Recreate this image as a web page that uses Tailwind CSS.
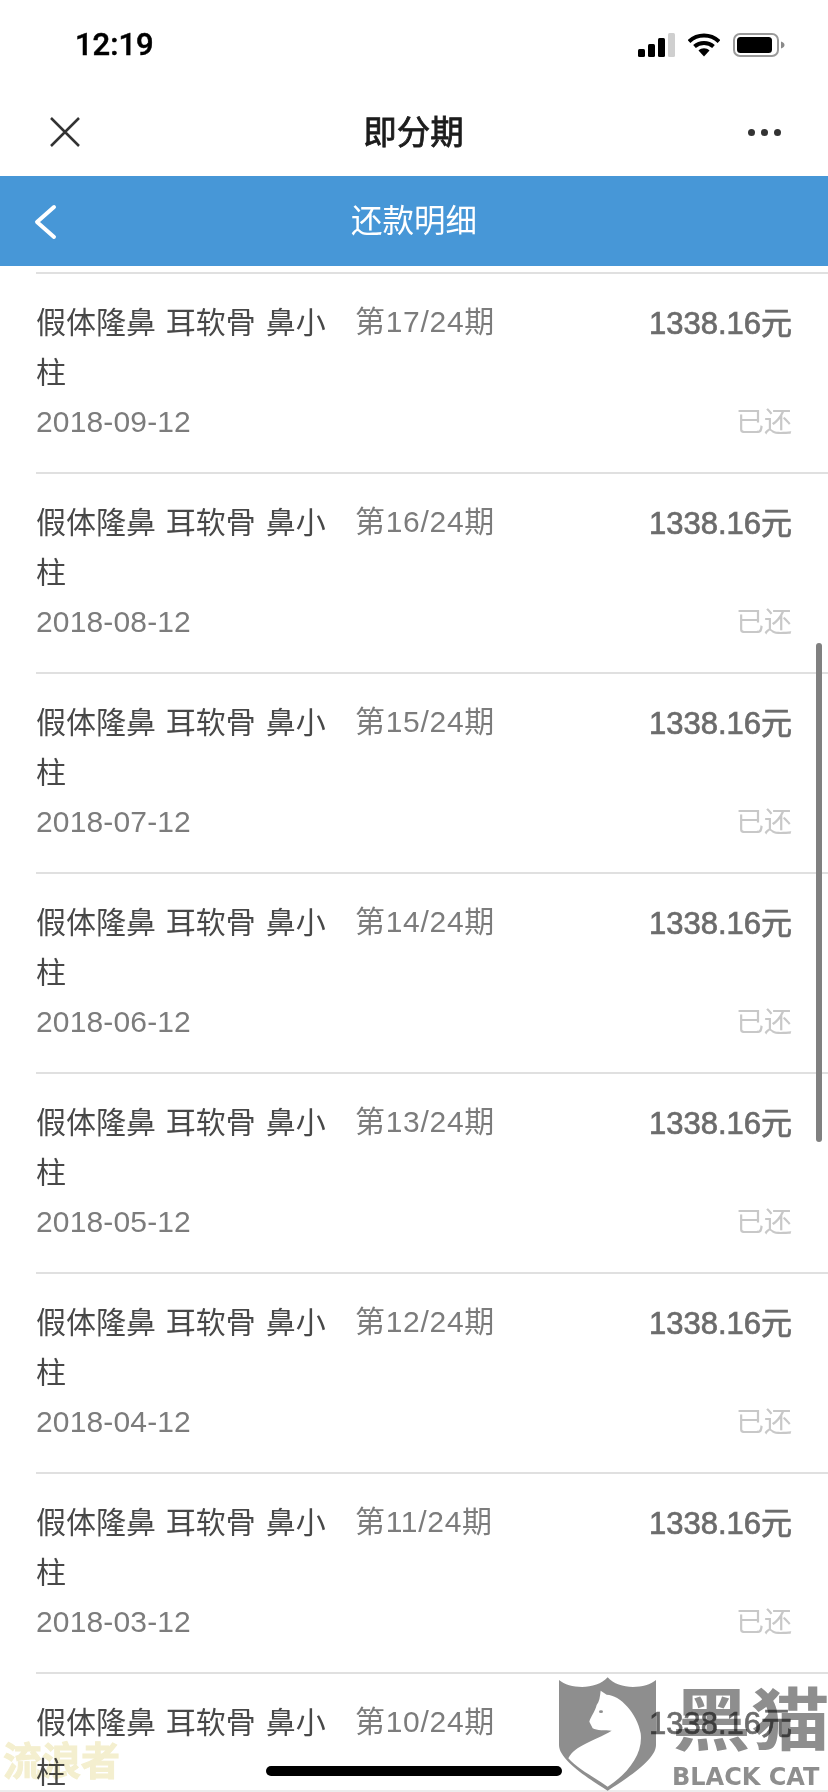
<!DOCTYPE html>
<html lang="zh">
<head>
<meta charset="utf-8">
<title>还款明细</title>
<script src="https://cdn.jsdelivr.net/npm/@tailwindcss/browser@4"></script>
</head>
<body class="bg-white">
<div class="relative w-[828px] h-[1792px] overflow-hidden bg-white font-['Liberation_Sans','Noto_Sans_CJK_SC',sans-serif]">

  <!-- Status bar -->
  <div class="h-[88px] pt-[2px] pl-[75px] pr-[43px] flex items-center justify-between">
    <span class="text-[31px] font-medium text-black font-['Roboto',sans-serif] [-webkit-text-stroke:0.5px_#000]">12:19</span>
    <div class="flex items-center gap-[13px]">
      <svg width="37" height="24" viewBox="0 0 37 24"><rect x="0" y="16" width="7" height="8" rx="1.5" fill="#000"/><rect x="10" y="11" width="7" height="13" rx="1.5" fill="#000"/><rect x="20" y="5" width="7" height="19" rx="1.5" fill="#000"/><rect x="30" y="0" width="7" height="24" rx="1.5" fill="#cfcfcf"/></svg>
      <svg width="32" height="24" viewBox="0 0 32 24"><path d="M1 8.500C9.500 0.500 22.500 0.500 31 8.500" fill="none" stroke="#000" stroke-width="4"/><path d="M6.500 13.500C11.800 8.800 20.200 8.800 25.500 13.500" fill="none" stroke="#000" stroke-width="4"/><path d="M10.500 17.500L16 23.500L21.500 17.500C18.500 14.500 13.500 14.500 10.500 17.500Z" fill="#000"/></svg>
      <svg width="52" height="24" viewBox="0 0 52 24"><rect x="1" y="1" width="44" height="22" rx="6" fill="none" stroke="#9a9a9a" stroke-width="2"/><rect x="4" y="4" width="35" height="16" rx="3.500" fill="#000"/><path d="M48 8.500C50.500 9.500 51.500 10.500 51.500 12C51.500 13.500 50.500 14.500 48 15.500Z" fill="#8a8a8a"/></svg>
    </div>
  </div>

  <!-- Mini program nav -->
  <div class="h-[88px] pl-[49px] pr-[47px] flex items-center justify-between">
    <svg width="32" height="32" viewBox="0 0 32 32"><path d="M2 2L30 30M30 2L2 30" stroke="#333" stroke-width="2.500" fill="none"/></svg>
    <span class="pt-[2px] pr-[2px] text-[33.500px] text-[#1c1c1c] [-webkit-text-stroke:0.8px_#1c1c1c]">即分期</span>
    <div class="flex gap-[6px] w-[33px]">
      <span class="w-[7px] h-[7px] shrink-0 rounded-full bg-[#333]"></span>
      <span class="w-[7px] h-[7px] shrink-0 rounded-full bg-[#333]"></span>
      <span class="w-[7px] h-[7px] shrink-0 rounded-full bg-[#333]"></span>
    </div>
  </div>

  <!-- Blue header -->
  <div class="relative h-[90px] bg-[#4797d7] flex items-center justify-center">
    <svg class="absolute left-[32px] top-[28px]" width="28" height="36" viewBox="0 0 28 36"><path d="M22 3L5 18L22 33" fill="none" stroke="#fff" stroke-width="4" stroke-linecap="round" stroke-linejoin="round"/></svg>
    <span class="pt-[2px] text-[31.500px] text-white">还款明细</span>
  </div>

  <div class="h-[6px]"></div>

  <!-- Repayment rows -->
  <div class="ml-[36px]">
    <div class="h-[200px] border-t-2 border-[#e0e0e0] pt-[24px] pr-[36px] flex">
      <div class="w-[319px] shrink-0 pr-[24px]">
        <p class="text-[30px] leading-[50px] text-[#484848] [word-spacing:1.500px]">假体隆鼻 耳软骨 鼻小柱</p>
        <p class="-mt-px text-[30px] leading-[50px] text-[#7c7c7c] tracking-[0.15px]">2018-09-12</p>
      </div>
      <p class="-mt-px text-[30px] leading-[50px] text-[#7c7c7c] tracking-[0.7px]">第17/24期</p>
      <div class="ml-auto h-[150px] flex flex-col items-end justify-between">
        <p class="mt-px text-[31px] leading-[50px] text-[#6c6c6c] [-webkit-text-stroke:0.7px_#6c6c6c]">1338.16元</p>
        <p class="text-[28px] leading-[50px] text-[#c8c8c8]">已还</p>
      </div>
    </div>
    <div class="h-[200px] border-t-2 border-[#e0e0e0] pt-[24px] pr-[36px] flex">
      <div class="w-[319px] shrink-0 pr-[24px]">
        <p class="text-[30px] leading-[50px] text-[#484848] [word-spacing:1.500px]">假体隆鼻 耳软骨 鼻小柱</p>
        <p class="-mt-px text-[30px] leading-[50px] text-[#7c7c7c] tracking-[0.15px]">2018-08-12</p>
      </div>
      <p class="-mt-px text-[30px] leading-[50px] text-[#7c7c7c] tracking-[0.7px]">第16/24期</p>
      <div class="ml-auto h-[150px] flex flex-col items-end justify-between">
        <p class="mt-px text-[31px] leading-[50px] text-[#6c6c6c] [-webkit-text-stroke:0.7px_#6c6c6c]">1338.16元</p>
        <p class="text-[28px] leading-[50px] text-[#c8c8c8]">已还</p>
      </div>
    </div>
    <div class="h-[200px] border-t-2 border-[#e0e0e0] pt-[24px] pr-[36px] flex">
      <div class="w-[319px] shrink-0 pr-[24px]">
        <p class="text-[30px] leading-[50px] text-[#484848] [word-spacing:1.500px]">假体隆鼻 耳软骨 鼻小柱</p>
        <p class="-mt-px text-[30px] leading-[50px] text-[#7c7c7c] tracking-[0.15px]">2018-07-12</p>
      </div>
      <p class="-mt-px text-[30px] leading-[50px] text-[#7c7c7c] tracking-[0.7px]">第15/24期</p>
      <div class="ml-auto h-[150px] flex flex-col items-end justify-between">
        <p class="mt-px text-[31px] leading-[50px] text-[#6c6c6c] [-webkit-text-stroke:0.7px_#6c6c6c]">1338.16元</p>
        <p class="text-[28px] leading-[50px] text-[#c8c8c8]">已还</p>
      </div>
    </div>
    <div class="h-[200px] border-t-2 border-[#e0e0e0] pt-[24px] pr-[36px] flex">
      <div class="w-[319px] shrink-0 pr-[24px]">
        <p class="text-[30px] leading-[50px] text-[#484848] [word-spacing:1.500px]">假体隆鼻 耳软骨 鼻小柱</p>
        <p class="-mt-px text-[30px] leading-[50px] text-[#7c7c7c] tracking-[0.15px]">2018-06-12</p>
      </div>
      <p class="-mt-px text-[30px] leading-[50px] text-[#7c7c7c] tracking-[0.7px]">第14/24期</p>
      <div class="ml-auto h-[150px] flex flex-col items-end justify-between">
        <p class="mt-px text-[31px] leading-[50px] text-[#6c6c6c] [-webkit-text-stroke:0.7px_#6c6c6c]">1338.16元</p>
        <p class="text-[28px] leading-[50px] text-[#c8c8c8]">已还</p>
      </div>
    </div>
    <div class="h-[200px] border-t-2 border-[#e0e0e0] pt-[24px] pr-[36px] flex">
      <div class="w-[319px] shrink-0 pr-[24px]">
        <p class="text-[30px] leading-[50px] text-[#484848] [word-spacing:1.500px]">假体隆鼻 耳软骨 鼻小柱</p>
        <p class="-mt-px text-[30px] leading-[50px] text-[#7c7c7c] tracking-[0.15px]">2018-05-12</p>
      </div>
      <p class="-mt-px text-[30px] leading-[50px] text-[#7c7c7c] tracking-[0.7px]">第13/24期</p>
      <div class="ml-auto h-[150px] flex flex-col items-end justify-between">
        <p class="mt-px text-[31px] leading-[50px] text-[#6c6c6c] [-webkit-text-stroke:0.7px_#6c6c6c]">1338.16元</p>
        <p class="text-[28px] leading-[50px] text-[#c8c8c8]">已还</p>
      </div>
    </div>
    <div class="h-[200px] border-t-2 border-[#e0e0e0] pt-[24px] pr-[36px] flex">
      <div class="w-[319px] shrink-0 pr-[24px]">
        <p class="text-[30px] leading-[50px] text-[#484848] [word-spacing:1.500px]">假体隆鼻 耳软骨 鼻小柱</p>
        <p class="-mt-px text-[30px] leading-[50px] text-[#7c7c7c] tracking-[0.15px]">2018-04-12</p>
      </div>
      <p class="-mt-px text-[30px] leading-[50px] text-[#7c7c7c] tracking-[0.7px]">第12/24期</p>
      <div class="ml-auto h-[150px] flex flex-col items-end justify-between">
        <p class="mt-px text-[31px] leading-[50px] text-[#6c6c6c] [-webkit-text-stroke:0.7px_#6c6c6c]">1338.16元</p>
        <p class="text-[28px] leading-[50px] text-[#c8c8c8]">已还</p>
      </div>
    </div>
    <div class="h-[200px] border-t-2 border-[#e0e0e0] pt-[24px] pr-[36px] flex">
      <div class="w-[319px] shrink-0 pr-[24px]">
        <p class="text-[30px] leading-[50px] text-[#484848] [word-spacing:1.500px]">假体隆鼻 耳软骨 鼻小柱</p>
        <p class="-mt-px text-[30px] leading-[50px] text-[#7c7c7c] tracking-[0.15px]">2018-03-12</p>
      </div>
      <p class="-mt-px text-[30px] leading-[50px] text-[#7c7c7c] tracking-[0.7px]">第11/24期</p>
      <div class="ml-auto h-[150px] flex flex-col items-end justify-between">
        <p class="mt-px text-[31px] leading-[50px] text-[#6c6c6c] [-webkit-text-stroke:0.7px_#6c6c6c]">1338.16元</p>
        <p class="text-[28px] leading-[50px] text-[#c8c8c8]">已还</p>
      </div>
    </div>
    <div class="h-[200px] border-t-2 border-[#e0e0e0] pt-[24px] pr-[36px] flex">
      <div class="w-[319px] shrink-0 pr-[24px]">
        <p class="text-[30px] leading-[50px] text-[#484848] [word-spacing:1.500px]">假体隆鼻 耳软骨 鼻小柱</p>
      </div>
      <p class="-mt-px text-[30px] leading-[50px] text-[#7c7c7c] tracking-[0.7px]">第10/24期</p>
      <div class="ml-auto h-[150px] flex flex-col items-end justify-between">
        <p class="mt-px text-[31px] leading-[50px] text-[#6c6c6c] [-webkit-text-stroke:0.7px_#6c6c6c]">1338.16元</p>
      </div>
    </div>
  </div>

  <!-- Scrollbar -->
  <div class="absolute left-[816px] top-[643px] w-[6px] h-[499px] rounded-full bg-[#808080]"></div>

  <!-- Home indicator -->
  <div class="absolute left-[266px] top-[1766px] w-[296px] h-[10px] rounded-full bg-black"></div>

  <!-- Watermarks -->
  <div class="absolute left-[3px] top-[1737px] text-[39px] leading-[50px] font-bold text-[#f4efcf] mix-blend-multiply [-webkit-text-stroke:1px_#f4efcf]">流浪者</div>

  <div class="absolute left-0 top-[1790px] w-full h-[2px] bg-[#ececec]"></div>

  <div class="absolute left-[550px] top-[1670px] w-[278px] h-[122px] mix-blend-multiply">
    <svg class="absolute left-0 top-0" width="120" height="122" viewBox="0 0 360 366">
      <path d="M27 30C60 58 140 60 173 22C205 60 285 58 318 30L318 225C318 270 230 325 173 362C115 325 27 270 27 225Z" fill="#8e8e8e"/>
      <path d="M152 62L170 74C210 75 262 130 272 190C280 250 235 310 173 350C130 320 80 295 55 265C75 225 130 215 185 182C165 182 140 182 128 175L118 155C122 140 135 125 140 105C148 95 150 80 152 62Z" fill="#fff"/>
      <ellipse cx="153" cy="125" rx="6" ry="4" fill="#8e8e8e"/>
    </svg>
    <div class="absolute left-[122px] top-[11px] text-[79px] leading-[80px] font-bold text-[#8e8e8e] whitespace-nowrap font-['Noto_Sans_CJK_SC',sans-serif] origin-top scale-y-[0.86]">黑猫</div>
    <div class="absolute left-[122px] top-[93px] text-[24px] leading-[28px] font-bold text-[#8e8e8e] whitespace-nowrap font-['DejaVu_Sans',sans-serif]">BLACK CAT</div>
  </div>
</div>
</body>
</html>
